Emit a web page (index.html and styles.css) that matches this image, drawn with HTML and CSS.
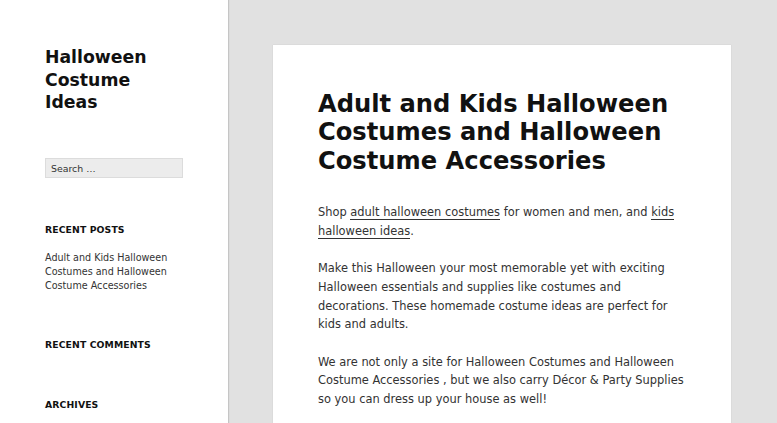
FILE: index.html
```html
<!DOCTYPE html>
<html lang="en">
<head>
<meta charset="utf-8">
<title>Halloween Costume Ideas</title>
<link rel="stylesheet" href="styles.css">
</head>
<body>
<div class="page">
  <aside class="sidebar">
    <h1 class="site-title">Halloween Costume Ideas</h1>
    <form class="search-form">
      <input class="search-field" type="search" placeholder="Search …">
    </form>
    <section class="widget">
      <h2 class="widget-title">Recent Posts</h2>
      <ul class="widget-list">
        <li>Adult and Kids Halloween Costumes and Halloween Costume Accessories</li>
      </ul>
    </section>
    <section class="widget">
      <h2 class="widget-title">Recent Comments</h2>
    </section>
    <section class="widget">
      <h2 class="widget-title">Archives</h2>
    </section>
  </aside>
  <main class="content">
    <article class="post">
      <h2 class="entry-title">Adult and Kids Halloween Costumes and Halloween Costume Accessories</h2>
      <div class="entry-content">
        <p>Shop <a href="#">adult halloween costumes</a> for women and men, and <a href="#">kids halloween ideas</a>.</p>
        <p>Make this Halloween your most memorable yet with exciting Halloween essentials and supplies like costumes and decorations. These homemade costume ideas are perfect for kids and adults.</p>
        <p>We are not only a site for Halloween Costumes and Halloween Costume Accessories , but we also carry Décor &amp; Party Supplies so you can dress up your house as well!</p>
      </div>
    </article>
  </main>
</div>
</body>
</html>
```

FILE: styles.css
```css
html, body {
  margin: 0;
  padding: 0;
  height: 100%;
  overflow: hidden;
}
body {
  font-family: "DejaVu Sans", sans-serif;
  color: #333;
  background: #e1e1e1;
}
.page {
  display: flex;
  min-height: 423px;
}
.sidebar {
  width: 183px;
  flex: none;
  background: #fff;
  padding: 46px 0 0 45px;
  box-shadow: 1px 0 1px rgba(0, 0, 0, 0.12);
  box-sizing: content-box;
  position: relative;
  z-index: 1;
}
.site-title {
  margin: 0;
  font-size: 17.3px;
  line-height: 22.7px;
  font-weight: bold;
  color: #111;
  width: 130px;
}
.search-form {
  margin: 44px 0 0;
}
.search-field {
  display: block;
  box-sizing: border-box;
  width: 138px;
  height: 20px;
  margin: 0;
  padding: 0 5px;
  border: 1px solid #dcdcdc;
  background: #ececec;
  font-family: "DejaVu Sans", sans-serif;
  font-size: 9.4px;
  color: #333;
  border-radius: 0;
  -webkit-appearance: none;
  appearance: none;
}
.search-field::placeholder {
  color: #333;
  opacity: 1;
}
.widget {
  margin: 0;
}
.widget-title {
  margin: 45px 0 0;
  font-size: 9.3px;
  line-height: 14px;
  font-weight: bold;
  text-transform: uppercase;
  letter-spacing: 0.01em;
  color: #111;
}
.widget:nth-of-type(2) .widget-title { margin-top: 45px; }
.widget:nth-of-type(3) .widget-title { margin-top: 46px; }
.widget-list {
  list-style: none;
  margin: 14px 0 0;
  padding: 0;
  font-size: 9.6px;
  line-height: 14px;
  width: 135px;
}
.content {
  flex: 1;
  padding: 45px 46px 0 45px;
}
.post {
  background: #fff;
  box-shadow: 0 0 1px rgba(0, 0, 0, 0.15);
  padding: 45px 45px 20px;
  min-height: 400px;
}
.entry-title {
  margin: 0;
  font-size: 24.2px;
  line-height: 28.4px;
  font-weight: bold;
  color: #111;
}
.entry-content {
  margin-top: 28px;
  font-size: 11.43px;
  line-height: 18.67px;
}
.entry-content p {
  margin: 0 0 18.67px;
}
.entry-content a {
  color: #333;
  text-decoration: none;
  border-bottom: 1px solid #333;
}
```
